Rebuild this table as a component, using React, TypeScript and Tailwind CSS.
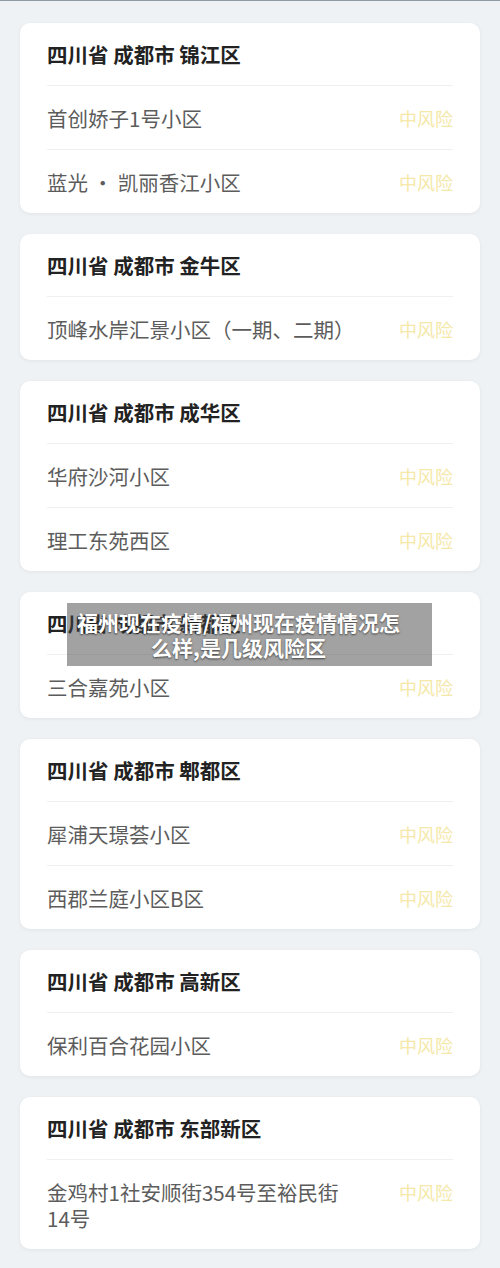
import React from "react";

type Card = { title: string; items: string[] };

const cards: Card[] = [
  { title: "四川省 成都市 锦江区", items: ["首创娇子1号小区", "蓝光 · 凯丽香江小区"] },
  { title: "四川省 成都市 金牛区", items: ["顶峰水岸汇景小区（一期、二期）"] },
  { title: "四川省 成都市 成华区", items: ["华府沙河小区", "理工东苑西区"] },
  { title: "四川省 成都市 新都区", items: ["三合嘉苑小区"] },
  { title: "四川省 成都市 郫都区", items: ["犀浦天璟荟小区", "西郡兰庭小区B区"] },
  { title: "四川省 成都市 高新区", items: ["保利百合花园小区"] },
  { title: "四川省 成都市 东部新区", items: ["金鸡村1社安顺街354号至裕民街\n14号"] },
];

const font = { fontFamily: '"Noto Sans CJK SC", "Noto Sans", sans-serif' };

const App = () => {
  return (
    <div className="relative min-h-[1268px] w-[500px] bg-[#eef2f4] border-t border-[#8d9aa6]" style={font}>
      <div className="flex flex-col gap-[21px] px-[20px] pt-[22px] pb-[20px]">
        {cards.map((c) => (
          <div key={c.title} className="rounded-[10px] bg-white px-[27px] shadow-[0_1px_4px_rgba(0,0,0,0.06)]">
            <div className="flex h-[62px] items-center text-[20.5px] font-bold text-[#222]">{c.title}</div>
            {c.items.map((it) => (
              <div key={it} className="flex items-start justify-between border-t border-[#eef0f2] pt-[19px] pb-[18px]">
                <span className="whitespace-pre-line text-[20.5px] leading-[26px] text-[#5c5c5c]">{it}</span>
                <span className="shrink-0 text-[18px] leading-[26px] text-[#f5e8a8]">中风险</span>
              </div>
            ))}
          </div>
        ))}
      </div>

      {/* title overlay */}
      <div className="absolute left-[67px] top-[602px] flex h-[63px] w-[365px] items-center justify-center bg-[rgba(70,70,70,0.5)] pl-[8px] pr-[30px]">
        <p className="text-center text-[21px] font-bold leading-[25px] text-white [text-shadow:0_1px_2px_rgba(0,0,0,0.6)]">
          福州现在疫情/福州现在疫情情况怎么样,是几级风险区
        </p>
      </div>
    </div>
  );
};

export default App;
